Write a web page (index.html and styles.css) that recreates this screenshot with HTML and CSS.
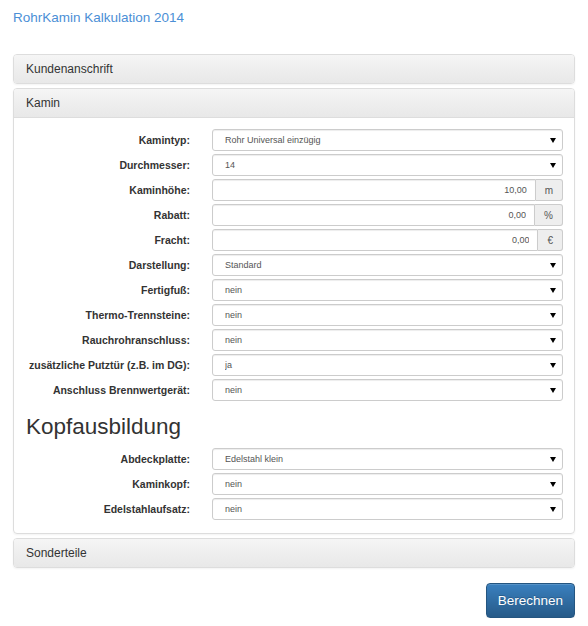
FILE: index.html
```html
<!DOCTYPE html>
<html lang="de">
<head>
<meta charset="utf-8">
<title>RohrKamin Kalkulation 2014</title>
<link rel="stylesheet" href="styles.css">
</head>
<body>
<div class="page">
  <h1 class="title">RohrKamin Kalkulation 2014</h1>

  <div class="panel">
    <div class="panel-heading">Kundenanschrift</div>
  </div>

  <div class="panel">
    <div class="panel-heading open">Kamin</div>
    <div class="panel-body">
      <div class="form-grid">
        <label class="lbl">Kamintyp:</label>
        <div class="select"><select><option>Rohr Universal einzügig</option></select></div>

        <label class="lbl">Durchmesser:</label>
        <div class="select"><select><option>14</option></select></div>

        <label class="lbl">Kaminhöhe:</label>
        <div class="input-group"><input type="text" value="10,00"><span class="addon">m</span></div>

        <label class="lbl">Rabatt:</label>
        <div class="input-group"><input type="text" value="0,00"><span class="addon">%</span></div>

        <label class="lbl">Fracht:</label>
        <div class="input-group"><input type="text" value="0,00"><span class="addon">€</span></div>

        <label class="lbl">Darstellung:</label>
        <div class="select"><select><option>Standard</option></select></div>

        <label class="lbl">Fertigfuß:</label>
        <div class="select"><select><option>nein</option></select></div>

        <label class="lbl">Thermo-Trennsteine:</label>
        <div class="select"><select><option>nein</option></select></div>

        <label class="lbl">Rauchrohranschluss:</label>
        <div class="select"><select><option>nein</option></select></div>

        <label class="lbl">zusätzliche Putztür (z.B. im DG):</label>
        <div class="select"><select><option>ja</option></select></div>

        <label class="lbl">Anschluss Brennwertgerät:</label>
        <div class="select"><select><option>nein</option></select></div>
      </div>

      <h2 class="section-title">Kopfausbildung</h2>

      <div class="form-grid">
        <label class="lbl">Abdeckplatte:</label>
        <div class="select"><select><option>Edelstahl klein</option></select></div>

        <label class="lbl">Kaminkopf:</label>
        <div class="select"><select><option>nein</option></select></div>

        <label class="lbl">Edelstahlaufsatz:</label>
        <div class="select"><select><option>nein</option></select></div>
      </div>
    </div>
  </div>

  <div class="panel last">
    <div class="panel-heading">Sonderteile</div>
  </div>

  <div class="actions">
    <button class="btn" type="button">Berechnen</button>
  </div>
</div>
</body>
</html>
```

FILE: styles.css
```css
* { box-sizing: border-box; }

body {
  margin: 0;
  font-family: "Liberation Sans", Arial, sans-serif;
  color: #333;
  background: #fff;
}

.page {
  padding: 0 13px;
}

.title {
  margin: 8px 0 26px;
  font-size: 13.5px;
  line-height: 20px;
  font-weight: normal;
  color: #4b8fd6;
}

.panel {
  border: 1px solid #ddd;
  border-radius: 4px;
  margin-bottom: 4px;
  box-shadow: 0 1px 2px rgba(0,0,0,.05);
  overflow: hidden;
}

.panel.last { margin-bottom: 0; }

.panel-heading {
  height: 28px;
  line-height: 28px;
  padding: 0 12px;
  font-size: 12px;
  color: #333;
  background: linear-gradient(#f5f5f5, #e8e8e8);
}

.panel-heading.open {
  border-bottom: 1px solid #ddd;
  height: 29px;
}

.panel-body {
  padding: 11px 11px 13px 0;
}

.form-grid {
  display: grid;
  grid-template-columns: 176px 1fr;
  column-gap: 22px;
  row-gap: 3px;
  grid-auto-rows: 22px;
}

.lbl {
  align-self: center;
  text-align: right;
  font-size: 10.5px;
  font-weight: bold;
  color: #333;
  white-space: nowrap;
}

.select {
  position: relative;
  height: 22px;
}

.select select {
  -webkit-appearance: none;
  appearance: none;
  width: 100%;
  height: 22px;
  margin: 0;
  padding: 0 20px 0 12px;
  border: 1px solid #ccc;
  border-radius: 3px;
  background: #fff;
  box-shadow: inset 0 1px 1px rgba(0,0,0,.075);
  font-family: "Liberation Sans", Arial, sans-serif;
  font-size: 9px;
  color: #555;
  outline: none;
}

.select::after {
  content: "";
  position: absolute;
  right: 7px;
  top: 50%;
  margin-top: -2px;
  border-left: 3px solid transparent;
  border-right: 3px solid transparent;
  border-top: 5px solid #000;
  pointer-events: none;
}

.input-group {
  display: flex;
  height: 22px;
}

.input-group input {
  flex: 1;
  min-width: 0;
  height: 22px;
  margin: 0;
  padding: 0 8px;
  border: 1px solid #ccc;
  border-radius: 3px 0 0 3px;
  box-shadow: inset 0 1px 1px rgba(0,0,0,.075);
  text-align: right;
  font-family: "Liberation Sans", Arial, sans-serif;
  font-size: 9px;
  color: #555;
  outline: none;
}

.addon {
  display: flex;
  align-items: center;
  justify-content: center;
  padding: 0 9px;
  border: 1px solid #ccc;
  border-left: 0;
  border-radius: 0 3px 3px 0;
  background: #eee;
  font-size: 10px;
  color: #555;
}

.section-title {
  margin: 13px 0 8px 12px;
  font-size: 22.5px;
  line-height: 26px;
  font-weight: normal;
  color: #333;
}

.actions {
  display: flex;
  justify-content: flex-end;
  margin-top: 15px;
}

.btn {
  height: 35px;
  padding: 0 11px;
  border: 1px solid #245580;
  border-radius: 4px;
  background: linear-gradient(#3a80bf, #265a88);
  box-shadow: inset 0 1px 0 rgba(255,255,255,.15), 0 1px 1px rgba(0,0,0,.075);
  color: #fff;
  font-family: "Liberation Sans", Arial, sans-serif;
  font-size: 13.5px;
  text-shadow: 0 -1px 0 rgba(0,0,0,.2);
}
```
